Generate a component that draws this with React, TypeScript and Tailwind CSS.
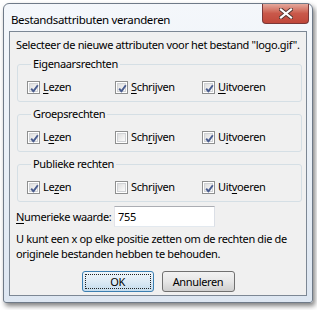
import React from "react";

const font = { fontFamily: '"Noto Sans", "Open Sans", sans-serif' };

const Check = ({ checked }: { checked: boolean }) => (
  <span className="w-[13px] h-[13px] border border-[#8e8f8f] bg-white p-px flex-shrink-0">
    <span className="relative block w-full h-full border border-[#d0d2d5] bg-gradient-to-br from-[#dedede] to-[#fbfbfb]">
      {checked && (
        <svg viewBox="0 0 9 9" className="absolute inset-0 w-[9px] h-[9px]">
          <path d="M1.2 4.6 L3.4 7.4 L7.8 1.2" fill="none" stroke="#4a5d8f" strokeWidth="1.9" strokeLinejoin="round" />
        </svg>
      )}
    </span>
  </span>
);

// label with access key underline at index u
const Accel = ({ text, u }: { text: string; u: number }) => (
  <span className="whitespace-nowrap">
    {text.slice(0, u)}
    <span className="underline underline-offset-2">{text[u]}</span>
    {text.slice(u + 1)}
  </span>
);

const Box = ({ text, u, checked }: { text: string; u: number; checked: boolean }) => (
  <div className="flex items-center gap-[3px] h-4">
    <Check checked={checked} />
    <Accel text={text} u={u} />
  </div>
);

const groups = [
  { title: "Eigenaarsrechten", items: [["Lezen", 0, true], ["Schrijven", 0, true], ["Uitvoeren", 0, true]] },
  { title: "Groepsrechten", items: [["Lezen", 1, true], ["Schrijven", 3, false], ["Uitvoeren", 1, true]] },
  { title: "Publieke rechten", items: [["Lezen", 2, true], ["Schrijven", 5, false], ["Uitvoeren", 3, true]] },
] as const;

export default function App() {
  return (
    <div className="w-[317px] h-[310px] bg-white pt-[3px] pl-[3px] text-[11px] tracking-[-0.35px] leading-4 text-black" style={font}>
      <div className="w-[310px] h-[300px] rounded-t-[6px] rounded-b-[3px] border border-[#6f7a88] bg-gradient-to-b from-[#f4f7fb] via-[#eaf0f7] to-[#dde6f1] shadow-[2px_3px_5px_rgba(0,0,0,0.5)] flex flex-col">
        {/* title bar */}
        <div className="h-[27px] flex items-start justify-between">
          <div className="pl-[7px] pt-[8px] text-[11.5px]">Bestandsattributen veranderen</div>
          <button className="mr-[3px] w-[47px] h-[20px] rounded-b-[4px] border border-t-0 border-[#7a3838] bg-gradient-to-b from-[#e4a89c] via-[#c9584a] to-[#c0473a] flex items-center justify-center">
            <svg viewBox="0 0 14 11" className="w-[14px] h-[11px]">
              <path d="M2 1.5 L12 9.5 M12 1.5 L2 9.5" stroke="#50342f" strokeWidth="4" strokeLinecap="square" />
              <path d="M2 1.5 L12 9.5 M12 1.5 L2 9.5" stroke="#ffffff" strokeWidth="2.2" strokeLinecap="square" />
            </svg>
          </button>
        </div>
        {/* client */}
        <div className="mx-[5px] h-[265px] border border-[#7c8794] bg-[#f0f0f0] px-[6px] pt-[5px]">
          <div className="whitespace-nowrap h-4">Selecteer de nieuwe attributen voor het bestand "logo.gif".</div>
          {groups.map((g, i) => (
            <fieldset key={g.title} className={`ml-px w-[285px] h-[46px] border border-[#d5dfe5] rounded-[3px] pl-[9px] ${i === 0 ? "mt-[3px]" : "mt-[4px]"}`}>
              <legend className="ml-[4px] px-[2px] h-4">{g.title}</legend>
              <div className="flex mt-[7px] h-4">
                <div className="w-[88px]"><Box text={g.items[0][0]} u={g.items[0][1]} checked={g.items[0][2]} /></div>
                <div className="w-[87px]"><Box text={g.items[1][0]} u={g.items[1][1]} checked={g.items[1][2]} /></div>
                <div><Box text={g.items[2][0]} u={g.items[2][1]} checked={g.items[2][2]} /></div>
              </div>
            </fieldset>
          ))}
          <div className="flex items-center mt-[4px] h-[21px]">
            <div className="w-[98px]"><Accel text="Numerieke waarde:" u={0} /></div>
            <div className="w-[101px] h-[21px] border border-[#abadb3] border-l-[#e2e3ea] border-r-[#dbdfe6] border-b-[#e3e9ef] bg-white pl-[3px] flex items-center">755</div>
          </div>
          <div className="mt-[4px] leading-[15px] whitespace-nowrap">
            U kunt een x op elke positie zetten om de rechten die de
            <br />
            originele bestanden hebben te behouden.
          </div>
          <div className="flex justify-center gap-[8px] mt-[10px]">
            <button className="w-[72px] h-[21px] rounded-[3px] border border-[#3c7fb1] bg-gradient-to-b from-[#eef6fc] via-[#dceaf5] to-[#c4dced] p-[2px]">
              <span className="block w-full h-full border border-dotted border-[#222] leading-[14px]">OK</span>
            </button>
            <button className="w-[73px] h-[21px] rounded-[3px] border border-[#707070] bg-gradient-to-b from-[#f2f2f2] via-[#e6e6e6] to-[#cfcfcf]">
              Annuleren
            </button>
          </div>
        </div>
      </div>
    </div>
  );
}
